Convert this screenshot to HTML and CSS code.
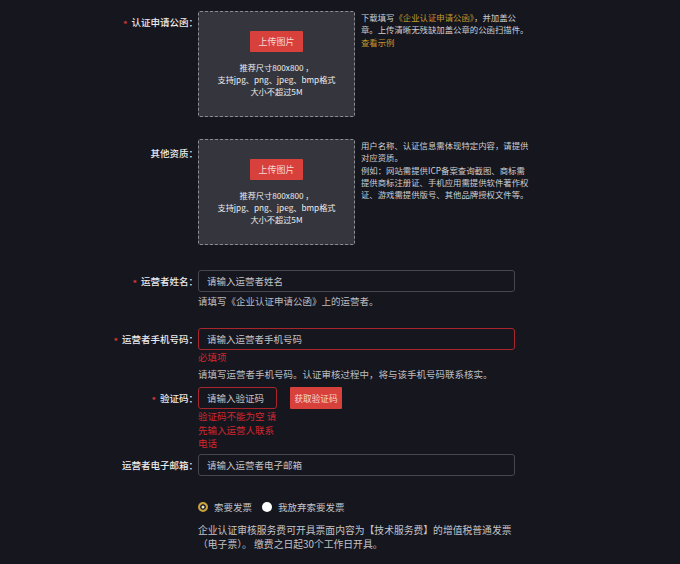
FILE: index.html
```html
<!DOCTYPE html>
<html lang="zh-CN">
<head>
    <meta charset="UTF-8">
    <meta name="viewport" content="width=device-width, initial-scale=1.0">
    <title>企业认证</title>
    <link rel="stylesheet" href="styles.css">
</head>
<body>

    <main class="auth-form">
        <!-- 认证申请公函 -->
        <div class="form-row row-letter">
            <label class="form-label required">认证申请公函：</label>
            <div class="upload-wrap">
                <div class="upload-box">
                    <button class="btn-red btn-upload">上传图片</button>
                    <p class="upload-tip">推荐尺寸800x800 ，<br>支持jpg、png、jpeg、bmp格式<br>大小不超过5M</p>
                </div>
                <p class="side-hint">下载填写<span class="gold">《企业认证申请公函》</span>，并加盖公<br>章。上传清晰无残缺加盖公章的公函扫描件。<br><a href="#" class="gold">查看示例</a></p>
            </div>
        </div>

        <!-- 其他资质 -->
        <div class="form-row row-other">
            <label class="form-label">其他资质：</label>
            <div class="upload-wrap">
                <div class="upload-box">
                    <button class="btn-red btn-upload">上传图片</button>
                    <p class="upload-tip">推荐尺寸800x800 ，<br>支持jpg、png、jpeg、bmp格式<br>大小不超过5M</p>
                </div>
                <p class="side-hint">用户名称、认证信息需体现特定内容，请提供<br>对应资质。<br>例如：网站需提供ICP备案查询截图、商标需<br>提供商标注册证、手机应用需提供软件著作权<br>证、游戏需提供版号、其他品牌授权文件等。</p>
            </div>
        </div>

        <!-- 运营者姓名 -->
        <div class="form-row row-name">
            <label class="form-label required">运营者姓名：</label>
            <div class="field">
                <input class="text-input" type="text" placeholder="请输入运营者姓名">
                <p class="field-hint hint-tight">请填写《企业认证申请公函》上的运营者。</p>
            </div>
        </div>

        <!-- 运营者手机号码 -->
        <div class="form-row row-phone">
            <label class="form-label required">运营者手机号码：</label>
            <div class="field">
                <input class="text-input is-error" type="text" placeholder="请输入运营者手机号码">
                <p class="field-error">必填项</p>
                <p class="field-hint">请填写运营者手机号码。认证审核过程中，将与该手机号码联系核实。</p>
            </div>
        </div>

        <!-- 验证码 -->
        <div class="form-row row-code">
            <label class="form-label required">验证码：</label>
            <div class="field">
                <div class="code-line">
                    <div class="code-col">
                        <input class="text-input code-input is-error" type="text" placeholder="请输入验证码">
                        <p class="field-error code-error">验证码不能为空 请先输入运营人联系电话</p>
                    </div>
                    <button class="btn-red btn-code">获取验证码</button>
                </div>
            </div>
        </div>

        <!-- 运营者电子邮箱 -->
        <div class="form-row row-email">
            <label class="form-label">运营者电子邮箱：</label>
            <div class="field">
                <input class="text-input" type="text" placeholder="请输入运营者电子邮箱">
            </div>
        </div>

        <!-- 发票 -->
        <div class="form-row row-invoice">
            <div class="form-label"></div>
            <div class="field">
                <div class="radio-group">
                    <label class="radio checked"><span class="radio-dot"></span>索要发票</label>
                    <label class="radio"><span class="radio-dot"></span>我放弃索要发票</label>
                </div>
                <p class="invoice-note">企业认证审核服务费可开具票面内容为【技术服务费】的增值税普通发票<br>（电子票）。 缴费之日起30个工作日开具。</p>
            </div>
        </div>
    </main>

</body>
</html>
```

FILE: styles.css
```css
* {
    margin: 0;
    padding: 0;
    box-sizing: border-box;
}

body {
    font-family: "Noto Sans CJK SC", "Noto Sans", sans-serif;
    font-size: 9.5px;
    background-color: #15161e;
    color: #c9c9cc;
    min-height: 100vh;
}

.auth-form {
    padding-top: 11px;
}

.form-row {
    display: flex;
    align-items: flex-start;
}

.row-other {
    margin-top: 22px;
}

.row-name {
    margin-top: 25px;
}

.row-phone {
    margin-top: 20px;
}

.row-code {
    margin-top: 6px;
}

.row-email {
    margin-top: 3px;
}

.row-invoice {
    margin-top: 24px;
}

.form-label {
    width: 198px;
    flex-shrink: 0;
    text-align: right;
    color: #ececee;
    font-weight: 500;
    line-height: 22px;
}

.row-letter .form-label {
    padding-top: 0;
}

.row-other .form-label {
    padding-top: 3px;
}

.required::before {
    content: "*";
    color: #d93a3a;
    margin-right: 4px;
    vertical-align: -0.25em;
}

/* upload */
.upload-wrap {
    display: flex;
    gap: 6px;
}

.upload-box {
    width: 157px;
    height: 106px;
    background-color: #35363d;
    border: 1px dashed #8c8d92;
    border-radius: 2px;
    display: flex;
    flex-direction: column;
    align-items: center;
    padding-top: 19px;
}

.btn-red {
    background-color: #d8413b;
    color: #f6d9d7;
    border: none;
    border-radius: 1px;
    font-family: inherit;
    font-size: 9px;
    cursor: pointer;
}

.btn-upload {
    width: 53px;
    height: 21px;
}

.upload-tip {
    margin-top: 9px;
    text-align: center;
    font-size: 8.2px;
    line-height: 12px;
    color: #ececee;
}

.side-hint {
    width: 172px;
    font-size: 8.4px;
    line-height: 12.25px;
    color: #cfcfd2;
    white-space: nowrap;
}

.gold {
    color: #c49a2c;
    text-decoration: none;
}

/* inputs */
.field {
    display: flex;
    flex-direction: column;
}

.text-input {
    width: 317px;
    height: 22px;
    padding: 0 8px;
    background-color: transparent;
    border: 1px solid #45474e;
    border-radius: 3px;
    font-family: inherit;
    font-size: 9.5px;
    color: #e0e0e0;
    outline: none;
}

.text-input::placeholder {
    color: #c2c2c5;
}

.text-input.is-error {
    border-color: #a8262c;
}

.field-hint {
    margin-top: 3px;
    line-height: 14px;
    color: #bdbdc0;
}

.field-hint.hint-tight {
    margin-top: 2px;
}

.field-error {
    line-height: 14px;
    color: #d3262e;
}

.code-line {
    display: flex;
    gap: 13px;
    align-items: flex-start;
}

.code-col {
    width: 79px;
}

.code-input {
    width: 79px;
}

.code-error {
    margin-top: 1px;
    line-height: 13.5px;
}

.btn-code {
    width: 52px;
    height: 22px;
    font-size: 8.6px;
}

/* invoice */
.radio-group {
    display: flex;
    gap: 10px;
    line-height: 14px;
}

.radio {
    display: flex;
    align-items: center;
    gap: 6px;
    color: #c4c4c7;
}

.radio-dot {
    width: 10px;
    height: 10px;
    border-radius: 50%;
    background-color: #fff;
}

.radio.checked .radio-dot {
    background-color: #f1e6c6;
    border: 2px solid #c9a03a;
    box-shadow: inset 0 0 0 1.5px #15161e;
}

.invoice-note {
    margin-top: 9px;
    font-size: 9.8px;
    line-height: 14px;
    color: #c4c4c7;
}
```
